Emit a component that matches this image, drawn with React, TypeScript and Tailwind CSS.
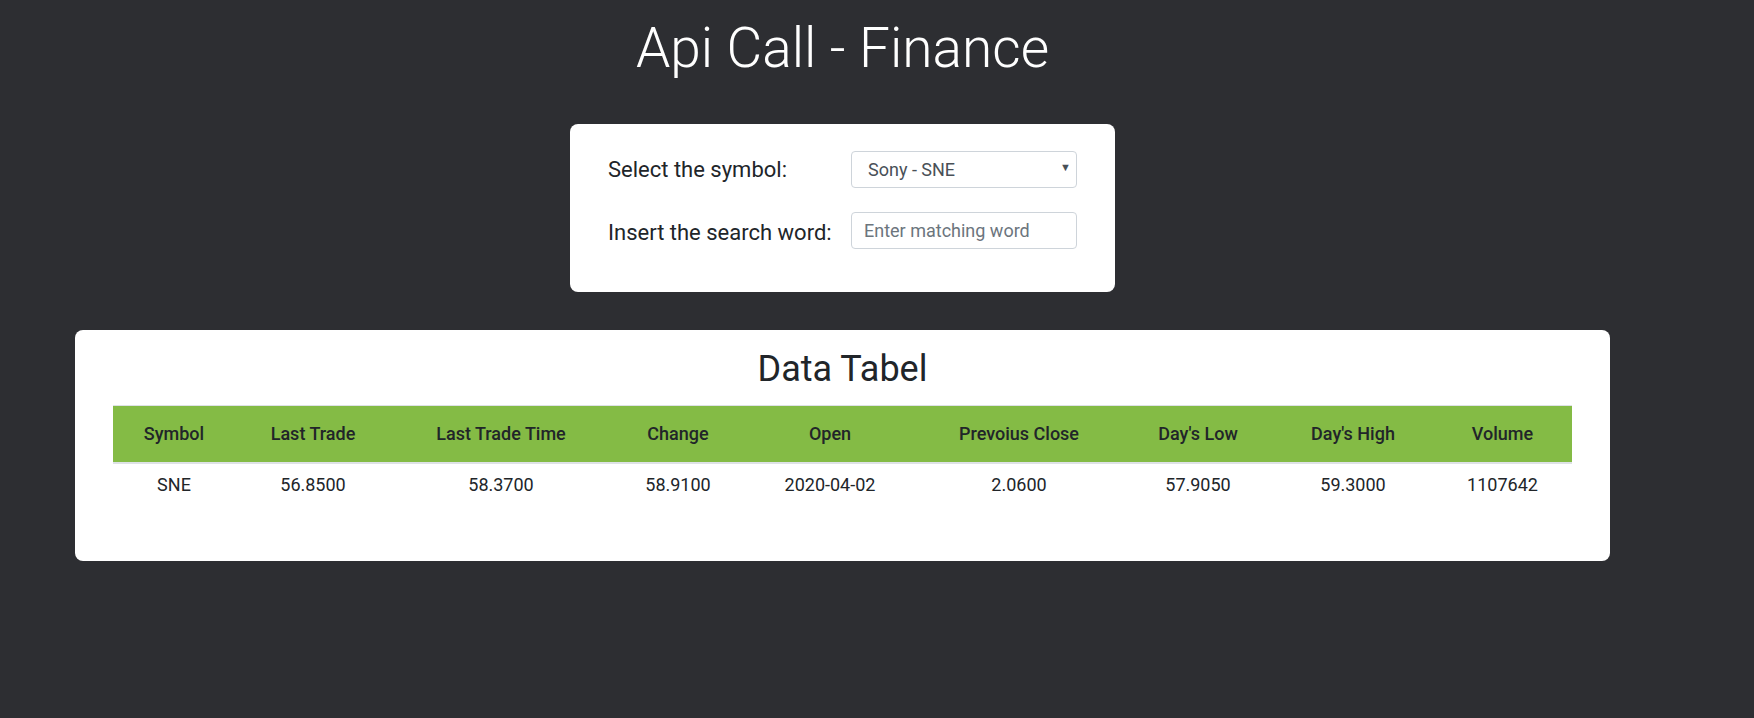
import { useState } from "react"

const symbols = [
  { label: "Sony - SNE", value: "SNE" },
  { label: "Apple - AAPL", value: "AAPL" },
  { label: "Microsoft - MSFT", value: "MSFT" },
]

// column widths follow the reference layout
const columns = [
  { title: "Symbol", key: "symbol", width: "w-[122px]" },
  { title: "Last Trade", key: "lastTrade", width: "w-[156px]" },
  { title: "Last Trade Time", key: "lastTradeTime", width: "w-[220px]" },
  { title: "Change", key: "change", width: "w-[134px]" },
  { title: "Open", key: "open", width: "w-[170px]" },
  { title: "Prevoius Close", key: "previousClose", width: "w-[208px]" },
  { title: "Day's Low", key: "dayLow", width: "w-[150px]" },
  { title: "Day's High", key: "dayHigh", width: "w-[160px]" },
  { title: "Volume", key: "volume", width: "w-[139px]" },
]

const rows: Record<string, string>[] = [
  {
    symbol: "SNE",
    lastTrade: "56.8500",
    lastTradeTime: "58.3700",
    change: "58.9100",
    open: "2020-04-02",
    previousClose: "2.0600",
    dayLow: "57.9050",
    dayHigh: "59.3000",
    volume: "1107642",
  },
]

const App = () => {
  const [symbol, setSymbol] = useState("SNE")
  const [word, setWord] = useState("")

  const filtered = rows.filter(
    (r) => r.symbol === symbol && (word === "" || Object.values(r).some((v) => v.includes(word)))
  )

  return (
    <div className="min-h-screen w-full bg-[#2d2e32] font-[Roboto,sans-serif] text-[#212529]">
      <div className="flex w-[1685px] flex-col items-center">
        <h1 className="pt-[15px] text-[55px] font-light leading-[1.2] text-white">Api Call - Finance</h1>

        <div className="mt-[43px] w-[545px] rounded-lg bg-white pt-[27px] pr-[38px] pb-[43px] pl-[38px]">
          <div className="flex items-center">
            <label className="w-[243px] shrink-0 whitespace-nowrap text-[22px]">Select the symbol:</label>
            <div className="relative min-w-0 flex-1">
              <select
                value={symbol}
                onChange={(e) => setSymbol(e.target.value)}
                className="h-[37px] w-full appearance-none rounded border border-[#ced4da] bg-white pl-[16px] text-[18px] text-[#495057] outline-none"
              >
                {symbols.map((s) => (
                  <option key={s.value} value={s.value}>
                    {s.label}
                  </option>
                ))}
              </select>
              <span className="pointer-events-none absolute top-[9px] right-[6px] text-[11px] text-[#495057]">▼</span>
            </div>
          </div>

          <div className="mt-[23px] flex items-center">
            <label className="w-[243px] shrink-0 whitespace-nowrap pt-[5px] text-[22px]">Insert the search word:</label>
            <input
              value={word}
              onChange={(e) => setWord(e.target.value)}
              placeholder="Enter matching word"
              className="h-[37px] min-w-0 flex-1 rounded border border-[#ced4da] px-[12px] text-[18px] text-[#495057] outline-none placeholder:text-[#6c757d]"
            />
          </div>
        </div>

        <div className="mt-[38px] w-[1535px] rounded-lg bg-white px-[38px] pt-[18px] pb-[56px]">
          <h2 className="text-center text-[36px] font-normal leading-[1.2]">Data Tabel</h2>
          <table className="mt-[14px] w-full table-fixed border-collapse border-t border-[#dee2e6]">
            <thead>
              <tr className="h-[57px] bg-[#84bb45]">
                {columns.map((c) => (
                  <th key={c.key} className={`${c.width} text-center text-[18px] font-medium`}>
                    {c.title}
                  </th>
                ))}
              </tr>
            </thead>
            <tbody className="border-t-2 border-[#dee2e6]">
              {filtered.map((r) => (
                <tr key={r.symbol} className="h-[42px]">
                  {columns.map((c) => (
                    <td key={c.key} className="text-center text-[18px]">
                      {r[c.key]}
                    </td>
                  ))}
                </tr>
              ))}
            </tbody>
          </table>
        </div>
      </div>
    </div>
  )
}

export default App
